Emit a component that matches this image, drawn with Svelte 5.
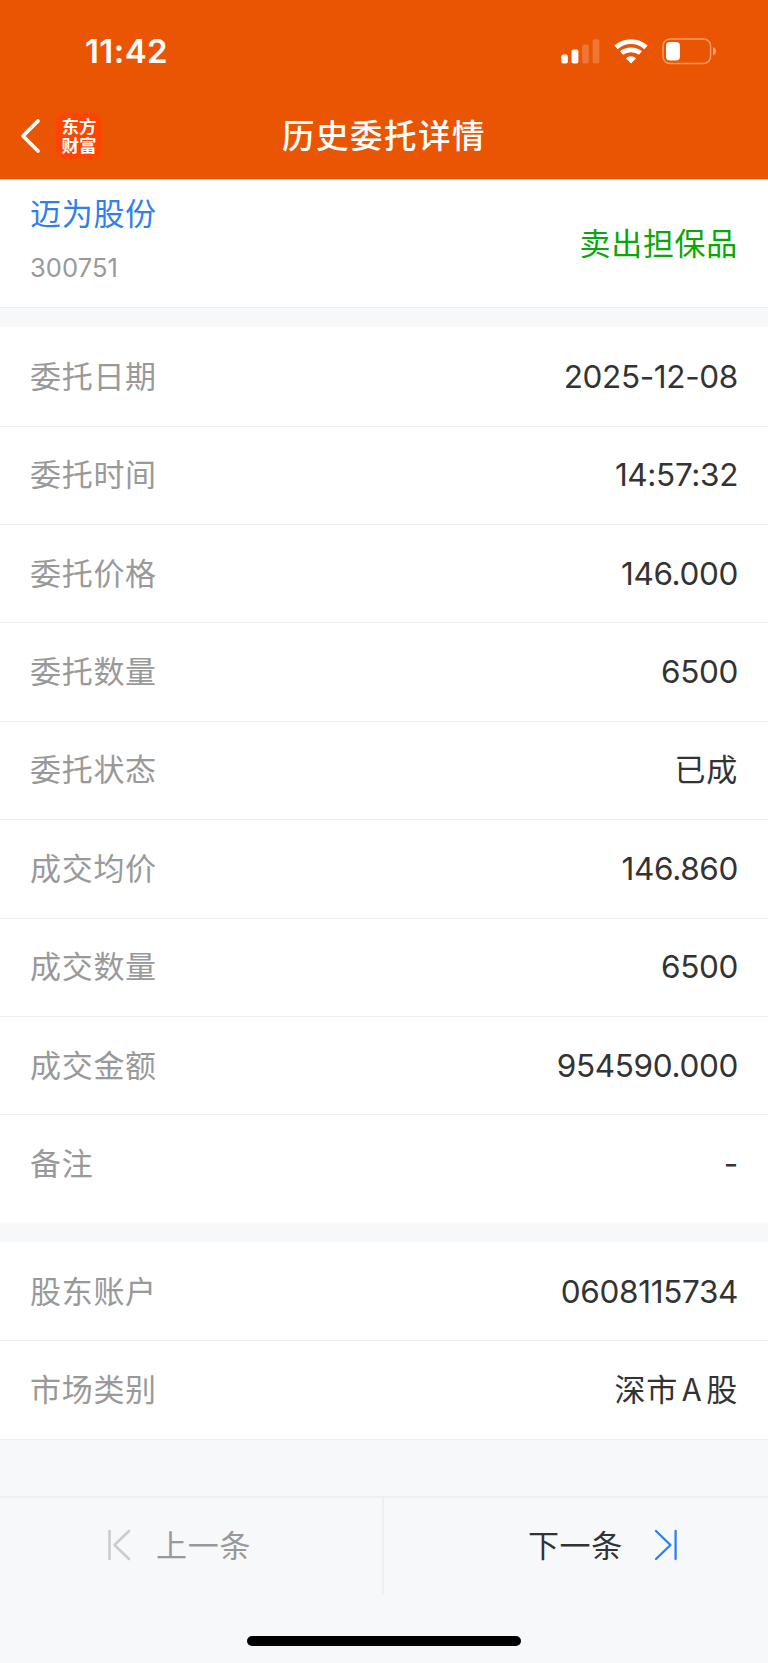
<script>
  const groups = [
    [
      { label: '委托日期', value: '2025-12-08' },
      { label: '委托时间', value: '14:57:32' },
      { label: '委托价格', value: '146.000' },
      { label: '委托数量', value: '6500' },
      { label: '委托状态', value: '已成', cjk: true },
      { label: '成交均价', value: '146.860' },
      { label: '成交数量', value: '6500' },
      { label: '成交金额', value: '954590.000' },
      { label: '备注', value: '-' }
    ],
    [
      { label: '股东账户', value: '0608115734' },
      { label: '市场类别', value: '深市 A 股', cjk: true }
    ]
  ];
</script>

<main>
  <header>
    <div class="status">
      <span class="time">11:42</span>
      <div class="indicators">
        <svg class="signal" width="39" height="25" viewBox="0 0 39 25" fill="#fff">
          <rect x="0.3" y="15.5" width="6.6" height="9" rx="2" />
          <rect x="10.6" y="10.5" width="6.8" height="14" rx="2" />
          <rect x="21.2" y="5.5" width="6.6" height="19" rx="2" opacity="0.2" />
          <rect x="31.6" y="0.3" width="6.8" height="24.2" rx="2" opacity="0.2" />
        </svg>
        <svg class="wifi" width="34" height="25" viewBox="0 0 34 25" fill="none" stroke="#fff" stroke-width="4.8">
          <path d="M2 8.4Q8.5 2.6 17 2.6T32 8.4" />
          <path d="M7.5 14Q11.5 10.8 17 10.8T26.5 14" />
          <path d="M17 24.4L11.9 19.3Q14 17.2 17 17.2T22.1 19.3Z" fill="#fff" stroke="none" />
        </svg>
        <svg class="battery" width="55" height="27" viewBox="0 0 55 27">
          <rect x="1" y="1" width="47.6" height="24.6" rx="7" fill="none" stroke="#fff" stroke-width="1.5" opacity="0.42" />
          <rect x="4" y="4" width="14" height="18.4" rx="4" fill="#fff" />
          <path d="M51 9Q54 10.5 54 13.2T51 17.4Z" fill="#fff" opacity="0.45" />
        </svg>
      </div>
    </div>
    <nav>
      <div class="left">
        <svg width="22" height="36" viewBox="0 0 22 36" fill="none" stroke="#fff" stroke-width="3.8" stroke-linecap="round" stroke-linejoin="round">
          <path d="M19 3L4 18L19 33" />
        </svg>
        <div class="logo">东方<br />财富</div>
      </div>
      <h1>历史委托详情</h1>
    </nav>
  </header>

  <section class="summary">
    <div class="stock">
      <div class="name">迈为股份</div>
      <div class="code">300751</div>
    </div>
    <div class="side">卖出担保品</div>
  </section>

  {#each groups as rows}
    <section class="group">
      {#each rows as row}
        <div class="row">
          <span class="label">{row.label}</span>
          <span class="value" class:cjk={row.cjk}>{row.value}</span>
        </div>
      {/each}
    </section>
  {/each}

  <footer>
    <div class="pager">
      <button class="prev">
        <svg width="24" height="32" viewBox="0 0 24 32" fill="none" stroke="#ccc" stroke-width="2.6" stroke-linecap="round" stroke-linejoin="round">
          <path d="M2.5 2V30M22 2L7.5 16L22 30" />
        </svg>
        <span>上一条</span>
      </button>
      <button class="next">
        <span>下一条</span>
        <svg width="24" height="32" viewBox="0 0 24 32" fill="none" stroke="#2f80ed" stroke-width="2.3" stroke-linecap="round" stroke-linejoin="round">
          <path d="M21.6 2V30M2 2L16.5 16L2 30" />
        </svg>
      </button>
    </div>
    <div class="home"></div>
  </footer>
</main>

<style>
  :global(body) {
    margin: 0;
    background: #f6f8fa;
  }

  main {
    display: flex;
    flex-direction: column;
    width: 768px;
    height: 1663px;
    overflow: hidden;
    font-family: Inter, 'Noto Sans CJK SC', sans-serif;
    color: #333;
  }

  header {
    box-sizing: border-box;
    height: 180px;
    flex: none;
    background: #ea5504;
    border-bottom: 1px solid #f9c4a6;
    color: #fff;
  }

  .status {
    display: flex;
    justify-content: space-between;
    align-items: center;
    height: 93px;
    padding: 9px 51px 0 85px;
    box-sizing: border-box;
  }

  .time {
    font-size: 33px;
    font-weight: 600;
    line-height: 40px;
    letter-spacing: 0.4px;
  }

  .indicators {
    display: flex;
    align-items: center;
  }

  .wifi {
    margin-left: 14px;
  }

  .battery {
    margin-left: 14px;
  }

  nav {
    display: grid;
    grid-template-columns: 1fr auto 1fr;
    align-items: center;
    height: 86px;
  }

  .left {
    display: flex;
    align-items: center;
    padding-left: 19px;
  }

  .logo {
    box-sizing: border-box;
    width: 46px;
    height: 46px;
    margin-left: 15px;
    padding-top: 3px;
    border-radius: 9px;
    background: #ff4400;
    font-family: 'Noto Sans CJK SC', sans-serif;
    font-size: 17.5px;
    font-weight: 700;
    line-height: 19px;
    text-align: center;
  }

  h1 {
    margin: 0;
    padding-bottom: 4px;
    font-family: 'Noto Sans CJK SC', sans-serif;
    font-size: 32.5px;
    font-weight: 500;
    line-height: 48px;
    letter-spacing: 1.5px;
  }

  .summary {
    display: flex;
    flex: none;
    justify-content: space-between;
    align-items: center;
    box-sizing: border-box;
    height: 128px;
    padding: 0 30px;
    border-bottom: 1px solid #eee;
    background: #fff;
  }

  .stock {
    padding-bottom: 12px;
  }

  .name,
  .side,
  .label,
  .cjk,
  .pager {
    font-family: 'Noto Sans CJK SC', sans-serif;
    font-size: 31px;
    font-weight: 400;
    line-height: 44px;
    letter-spacing: 0.7px;
  }

  .name {
    color: #2f80ed;
  }

  .code {
    margin-top: 17px;
    font-size: 25.5px;
    line-height: 34px;
    letter-spacing: 0.1px;
    color: #999;
  }

  .side {
    padding-bottom: 3px;
    color: #09a709;
  }

  .group {
    flex: none;
    margin-top: 19px;
    padding-top: 1.2px;
    background: #fff;
  }

  .group:nth-of-type(2) {
    padding-bottom: 9.6px;
  }

  .row {
    display: flex;
    justify-content: space-between;
    align-items: center;
    box-sizing: border-box;
    height: 98.4px;
    padding: 0 30px;
    border-bottom: 1px solid #eee;
  }

  .group:nth-of-type(2) .row:last-child {
    border-bottom: 0;
    height: 98px;
  }

  .label {
    padding-bottom: 4px;
    color: #999;
  }

  .value {
    padding-bottom: 1px;
    font-size: 31.5px;
    letter-spacing: -0.35px;
  }

  .value.cjk {
    padding-bottom: 4px;
    font-size: 31px;
    letter-spacing: 0.7px;
    word-spacing: -3.2px;
  }

  footer {
    display: flex;
    flex-direction: column;
    align-items: center;
    margin-top: auto;
    height: 165px;
    border-top: 2px solid #eeeff1;
  }

  .pager {
    display: flex;
    width: 100%;
    height: 97px;
  }

  button {
    display: flex;
    flex: none;
    width: 50%;
    align-items: center;
    box-sizing: border-box;
    padding: 0 0 3px;
    border: 0;
    background: none;
    font: inherit;
    letter-spacing: inherit;
    color: inherit;
  }

  button span {
    padding-bottom: 2px;
  }

  .prev {
    gap: 25px;
    padding-left: 107px;
    border-right: 2px solid #eeeff1;
    color: #999;
  }

  .next {
    justify-content: flex-end;
    gap: 31px;
    padding-right: 90px;
  }

  .home {
    width: 274px;
    height: 10px;
    margin-top: 41px;
    border-radius: 5px;
    background: #000;
  }
</style>
